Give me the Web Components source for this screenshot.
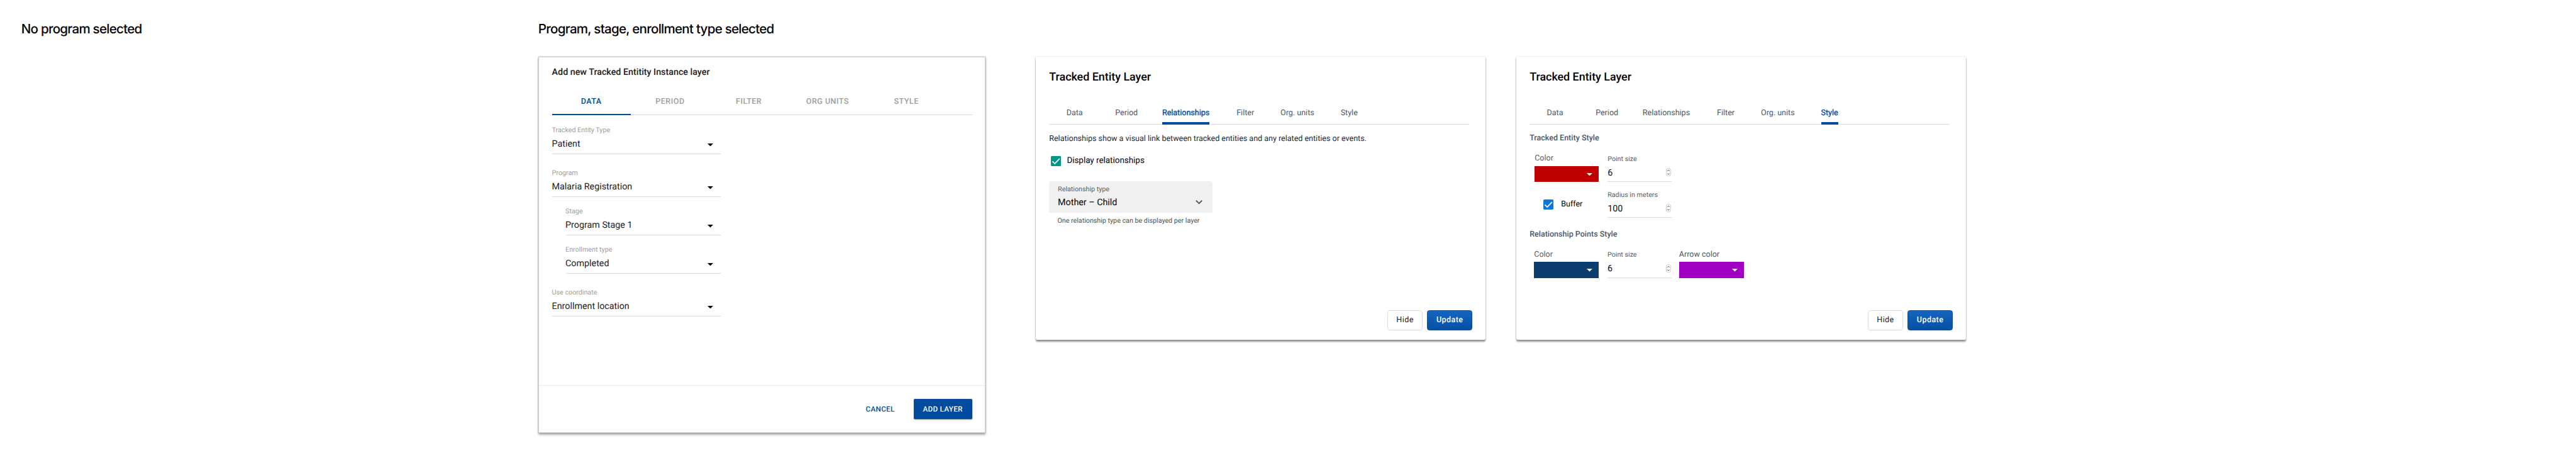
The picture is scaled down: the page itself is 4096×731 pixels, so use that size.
<!DOCTYPE html>
<html lang="en">
<head>
<meta charset="utf-8">
<title>Tracked entity layer dialogs</title>
<style>
  html, body { margin: 0; background: #fff; }
  body { font-family: Roboto, "Liberation Sans", sans-serif; overflow: hidden; text-rendering: geometricPrecision; }
  design-board { zoom: 0.894518; }
</style>
</head>
<body>
<design-board>
  <board-section heading="No program selected" style="width:918px"></board-section>
  <board-section heading="Program, stage, enrollment type selected" style="--shift:-.2px">
    <layer-card variant="legacy" heading="Add new Tracked Entitity Instance layer">
      <tab-bar variant="caps" tabs="DATA,PERIOD,FILTER,ORG UNITS,STYLE" active="DATA"></tab-bar>
      <select-field label="Tracked Entity Type" style="margin-top:19px">Patient</select-field>
      <select-field label="Program" style="margin-top:26px">Malaria Registration</select-field>
      <select-field label="Stage" nested style="margin-top:18px">Program Stage 1</select-field>
      <select-field label="Enrollment type" nested style="margin-top:18px">Completed</select-field>
      <select-field label="Use coordinate" style="margin-top:26px">Enrollment location</select-field>
      <action-button slot="actions" kind="text">CANCEL</action-button>
      <action-button slot="actions" kind="raised">ADD LAYER</action-button>
    </layer-card>

    <layer-card heading="Tracked Entity Layer" style="margin-left:89px">
      <tab-bar tabs="Data,Period,Relationships,Filter,Org. units,Style" active="Relationships"></tab-bar>
      <info-text>Relationships show a visual link between tracked entities and any related entities or events.</info-text>
      <check-box style="margin:19px 0 0 3px; --gap:10.5px; --size:15px">Display relationships</check-box>
      <filled-select label="Relationship type" helper="One relationship type can be displayed per layer">Mother – Child</filled-select>
      <action-button slot="actions" kind="basic">Hide</action-button>
      <action-button slot="actions" kind="primary">Update</action-button>
    </layer-card>

    <layer-card heading="Tracked Entity Layer" style="margin-left:54px">
      <tab-bar tabs="Data,Period,Relationships,Filter,Org. units,Style" active="Style"></tab-bar>
      <style-group heading="Tracked Entity Style" style="margin-top:14.8px">
        <style-row style="margin:17.5px 0 0 9px; gap:16px">
          <color-swatch label="Color" color="#bd0000" style="width:113.7px"></color-swatch>
          <number-field label="Point size">6</number-field>
        </style-row>
        <style-row style="margin:14px 0 0 24px; gap:0">
          <check-box style="width:114.7px; margin-top:16px; --gap:14px; --size:14px; --box:#0b76db">Buffer</check-box>
          <number-field label="Radius in meters">100</number-field>
        </style-row>
      </style-group>
      <style-group heading="Relationship Points Style" style="margin-top:19.5px">
        <style-row style="margin:17.3px 0 0 8px; gap:15.5px">
          <color-swatch label="Color" color="#0d3c6e" style="width:115px"></color-swatch>
          <number-field label="Point size">6</number-field>
          <color-swatch label="Arrow color" color="#a000c2" style="width:115px; margin-left:-2px; --label:#4a5768"></color-swatch>
        </style-row>
      </style-group>
      <action-button slot="actions" kind="basic">Hide</action-button>
      <action-button slot="actions" kind="primary">Update</action-button>
    </layer-card>
  </board-section>
</design-board>

<script>
const define = (name, render) => customElements.define(name, class extends HTMLElement {
  connectedCallback() {
    if (this.shadowRoot) return;
    const root = this.attachShadow({ mode: 'open' });
    const template = document.createElement('template');
    template.innerHTML = render(k => this.getAttribute(k) || '');
    root.append(template.content.cloneNode(true));
  }
});

define('design-board', () => `
  <style>:host{display:flex;box-sizing:border-box;width:4579px;height:817px;padding:37px 0 0 39px}</style>
  <slot></slot>`);

define('board-section', a => `
  <style>
    :host{display:block;flex:none}
    h2{margin:0 0 0 var(--shift,-1.3px);font:500 23px/30px Inter,"Liberation Sans",sans-serif;letter-spacing:-.84px;color:#000;white-space:nowrap}
    .cards{display:flex;align-items:flex-start;margin-top:34px}
  </style>
  <h2>${a('heading')}</h2>
  <div class="cards"><slot></slot></div>`);

define('layer-card', a => `
  <style>
    :host{display:flex;flex-direction:column;flex:none;box-sizing:border-box;width:800px;height:502.5px;background:#fff;
      border-radius:3px;box-shadow:0 0 2px rgba(0,0,0,.2),0 2.5px 3px rgba(0,0,0,.42)}
    h3{margin:0 0 32px;font-size:20px;line-height:24px;font-weight:500;color:#000}
    .body{flex:1;padding:24px 24px 0}
    .actions{display:flex;justify-content:flex-end;align-items:center;gap:8px;padding:0 24px 16.5px}
    :host([variant=legacy]){width:795px;height:668px;border:1px solid #c9c9c9;border-radius:1px;
      box-shadow:0 0 3px rgba(0,0,0,.2),0 3px 4px rgba(0,0,0,.32)}
    :host([variant=legacy]) h3{margin-bottom:18px;font-size:16px;line-height:20px;color:#212121}
    :host([variant=legacy]) .body{padding:17px 23px 0}
    :host([variant=legacy]) .actions{border-top:1px solid #e9e9e9;padding:24px 23px 23px;gap:33.5px}
  </style>
  <div class="body"><h3>${a('heading')}</h3><slot></slot></div>
  <div class="actions"><slot name="actions"></slot></div>`);

define('tab-bar', a => `
  <style>
    :host{display:grid;box-sizing:border-box;width:747px;height:40px;padding-left:30.7px;justify-content:start;
      grid-template-columns:86.7px 83.5px 132.2px 78.2px 106.8px auto;
      font-size:14px;color:#4a5768;box-shadow:inset 0 -1px #dcdcdc}
    span{justify-self:start;box-sizing:border-box;height:40px;line-height:40.5px;white-space:nowrap}
    .on{color:#004ba0;-webkit-text-stroke:.35px #004ba0;border-bottom:4.5px solid #004ba0}
    :host([variant=caps]){height:48px;padding:0;grid-template-columns:repeat(5,140px);font-weight:500;letter-spacing:.56px;color:#9e9e9e}
    :host([variant=caps]) span{justify-self:stretch;height:48px;line-height:47.5px;text-align:center}
    :host([variant=caps]) .on{-webkit-text-stroke:0;border-bottom-width:2.3px}
  </style>
  ${a('tabs').split(',').map(t => `<span class="${t === a('active') ? 'on' : ''}">${t}</span>`).join('')}`);

define('select-field', a => `
  <style>
    :host{display:block;width:300px}
    :host([nested]){margin-left:24px;width:276px}
    label{display:block;font-size:12px;line-height:16px;color:#9e9e9e}
    .value{display:flex;align-items:center;justify-content:space-between;margin:4px 0 0 1px;padding:0 13px 5px 0;
      height:24px;line-height:25px;font-size:16px;color:#212121;border-bottom:1px solid #dcdcdc}
    .value span{margin-left:-1px}
    svg{width:10px;height:5px;margin-top:3px}
  </style>
  <label>${a('label')}</label>
  <div class="value"><span><slot></slot></span><svg viewBox="0 0 10 5"><path d="M0 0h10L5 5z" fill="#000"/></svg></div>`);

define('info-text', () => `
  <style>:host{display:block;margin-top:16.5px;font-size:14px;line-height:20px;color:#212934}</style><slot></slot>`);

define('check-box', () => `
  <style>
    :host{display:flex;align-items:center;height:20px;line-height:20px;gap:var(--gap);font-size:var(--size);color:#000}
    svg{flex:none;width:18px;height:18px}
  </style>
  <svg viewBox="0 0 18 18"><rect width="18" height="18" rx="2" fill="var(--box,#009688)"/><path d="M2.7 9.3l4.2 4.2 8.6-8.8" fill="none" stroke="#fff" stroke-width="1.9"/></svg><slot></slot>`);

define('filled-select', a => `
  <style>
    :host{display:block;width:290px;margin-top:25.7px}
    .box{display:flex;justify-content:space-between;box-sizing:border-box;height:56px;padding:7px 17.5px 0 15.5px;background:#f0f0f0;border-radius:4px 4px 0 0}
    label{display:block;font-size:12px;line-height:16px;color:#616161}
    .value{margin-top:2.5px;font-size:16px;line-height:25px;color:#000}
    svg{width:12.4px;height:7.4px;margin-top:26.8px}
    .helper{margin:6.5px 0 0 14.7px;font-size:12px;line-height:16px;color:#4f4f4f;white-space:nowrap}
  </style>
  <div class="box"><div><label>${a('label')}</label><div class="value"><slot></slot></div></div>
  <svg viewBox="0 0 12 7.4"><path d="M1.4 0L6 4.6 10.6 0 12 1.4l-6 6-6-6z" fill="#4f4f4f"/></svg></div>
  <div class="helper">${a('helper')}</div>`);

define('style-group', a => `
  <style>
    :host{display:block}
    h4{margin:0;font-size:14px;line-height:20px;font-weight:500;color:#4a5768}
  </style>
  <h4>${a('heading')}</h4><slot></slot>`);

define('style-row', () => `<style>:host{display:flex;align-items:flex-start;height:50px}</style><slot></slot>`);

define('color-swatch', a => `
  <style>
    :host{display:block;flex:none}
    label{display:block;font-size:14px;line-height:18px;color:var(--label,#5c5c5c);white-space:nowrap}
    .chip{display:flex;justify-content:flex-end;align-items:center;box-sizing:border-box;height:28.5px;margin-top:3.5px;padding:1px 11.2px 0 0;background:${a('color')}}
    svg{width:10px;height:5px}
  </style>
  <label>${a('label')}</label>
  <div class="chip"><svg viewBox="0 0 10 5"><path d="M0 0h10L5 5z" fill="#fff"/></svg></div>`);

define('number-field', a => `
  <style>
    :host{display:block;flex:none;width:113.7px;padding-top:1.5px}
    label{display:block;font-size:12px;line-height:16px;color:#5c5c5c;white-space:nowrap}
    .value{display:flex;justify-content:space-between;height:24px;line-height:25px;margin-top:4px;padding-bottom:3.5px;
      font-size:16px;color:#111;border-bottom:1px solid #dcdcdc}
    svg{width:9px;height:15px;margin:4px 1px 0 0}
  </style>
  <label>${a('label')}</label>
  <div class="value"><span><slot></slot></span>
  <svg viewBox="0 0 9 15"><rect x=".5" y=".5" width="8" height="14" rx="4" fill="#fff" stroke="#c8c8c8"/><path d="M2.6 5.5l1.9-1.9 1.9 1.9M2.6 9.5l1.9 1.9 1.9-1.9" fill="none" stroke="#444" stroke-width="1.1"/></svg></div>`);

define('action-button', () => `
  <style>
    :host{display:flex;align-items:center;justify-content:center;box-sizing:border-box;flex:none;height:36px;font-size:14px;white-space:nowrap;letter-spacing:.5px}
    :host([kind=text]),:host([kind=raised]){font-size:13px;font-weight:500;letter-spacing:.4px;color:#004ba0}
    :host([kind=raised]){width:104px;color:#fff;background:#004ba0;border-radius:2px;box-shadow:0 1px 2px rgba(0,0,0,.4)}
    :host([kind=basic]){width:63px;border:1px solid #dcdcdc;border-radius:4px;color:#212121}
    :host([kind=primary]){width:80px;border:1px solid #0a4d97;border-radius:4px;font-weight:500;color:#fff;background:linear-gradient(#1565c0,#0650a3)}
  </style><slot></slot>`);
</script>
</body>
</html>
